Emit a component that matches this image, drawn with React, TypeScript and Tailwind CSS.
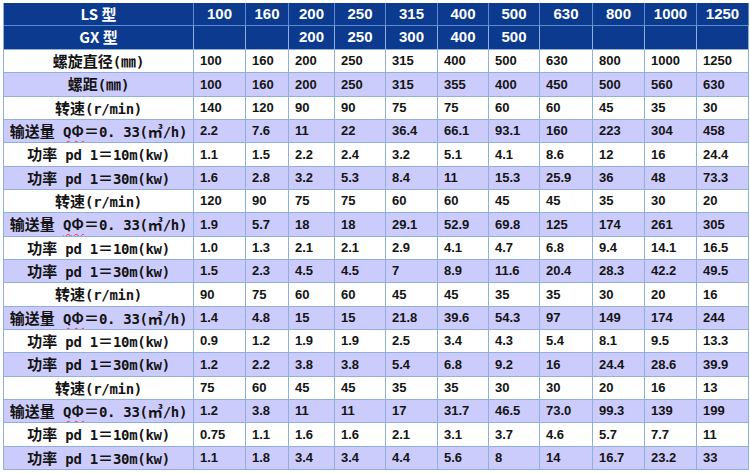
import React from "react"

const sizes = ["100", "160", "200", "250", "315", "400", "500", "630", "800", "1000", "1250"]
const gx = ["", "", "200", "250", "300", "400", "500", "", "", "", ""]

// half-width latin inside the labels is monospaced in the original sheet
function M({ children }: { children: React.ReactNode }) {
  return <span className="font-['DejaVu_Sans_Mono',monospace] text-[14px] leading-none tracking-[-0.3px]">{children}</span>
}

const speed = (
  <>
    转速<M>(r/min)</M>
  </>
)
const flow = (
  <>
    输送量<M> </M>
    <span className="underline decoration-wavy decoration-red-500 decoration-1 underline-offset-[3px]">
      <M>Q</M>Φ
    </span>
    ＝<M>0. 33(</M>㎥<M>/h)</M>
  </>
)
const p10 = (
  <>
    功率<M> pd 1</M>＝<M>10m(kw)</M>
  </>
)
const p30 = (
  <>
    功率<M> pd 1</M>＝<M>30m(kw)</M>
  </>
)

type Row = { label: React.ReactNode; values: string[] }

const rows: Row[] = [
  { label: <>螺旋直径<M>(</M>㎜<M>)</M></>, values: ["100", "160", "200", "250", "315", "400", "500", "630", "800", "1000", "1250"] },
  { label: <>螺距<M>(</M>㎜<M>)</M></>, values: ["100", "160", "200", "250", "315", "355", "400", "450", "500", "560", "630"] },
  { label: speed, values: ["140", "120", "90", "90", "75", "75", "60", "60", "45", "35", "30"] },
  { label: flow, values: ["2.2", "7.6", "11", "22", "36.4", "66.1", "93.1", "160", "223", "304", "458"] },
  { label: p10, values: ["1.1", "1.5", "2.2", "2.4", "3.2", "5.1", "4.1", "8.6", "12", "16", "24.4"] },
  { label: p30, values: ["1.6", "2.8", "3.2", "5.3", "8.4", "11", "15.3", "25.9", "36", "48", "73.3"] },
  { label: speed, values: ["120", "90", "75", "75", "60", "60", "45", "45", "35", "30", "20"] },
  { label: flow, values: ["1.9", "5.7", "18", "18", "29.1", "52.9", "69.8", "125", "174", "261", "305"] },
  { label: p10, values: ["1.0", "1.3", "2.1", "2.1", "2.9", "4.1", "4.7", "6.8", "9.4", "14.1", "16.5"] },
  { label: p30, values: ["1.5", "2.3", "4.5", "4.5", "7", "8.9", "11.6", "20.4", "28.3", "42.2", "49.5"] },
  { label: speed, values: ["90", "75", "60", "60", "45", "45", "35", "35", "30", "20", "16"] },
  { label: flow, values: ["1.4", "4.8", "15", "15", "21.8", "39.6", "54.3", "97", "149", "174", "244"] },
  { label: p10, values: ["0.9", "1.2", "1.9", "1.9", "2.5", "3.4", "4.3", "5.4", "8.1", "9.5", "13.3"] },
  { label: p30, values: ["1.2", "2.2", "3.8", "3.8", "5.4", "6.8", "9.2", "16", "24.4", "28.6", "39.9"] },
  { label: speed, values: ["75", "60", "45", "45", "35", "35", "30", "30", "20", "16", "13"] },
  { label: flow, values: ["1.2", "3.8", "11", "11", "17", "31.7", "46.5", "73.0", "99.3", "139", "199"] },
  { label: p10, values: ["0.75", "1.1", "1.6", "1.6", "2.1", "3.1", "3.7", "4.6", "5.7", "7.7", "11"] },
  { label: p30, values: ["1.1", "1.8", "3.4", "3.4", "4.4", "5.6", "8", "14", "16.7", "23.2", "33"] },
]

export default function App() {
  return (
    <div className="w-[750px] h-[474px] bg-white">
      <div className="ml-[3px] mt-[3px] w-[745px] h-[467px] grid border-l border-[#8fb0dc] grid-cols-[190px_52px_43px_46px_51px_52px_51px_51px_53px_52px_52px_52px] grid-rows-[23px_24px_repeat(18,minmax(0,1fr))]">
        {/* header: LS */}
        <div className="bg-[#0b3a8e] border-r border-b border-[#5d8bd0] flex items-center justify-center text-white font-bold text-[15px] font-['Noto_Sans_CJK_SC',sans-serif]">
          LS 型
        </div>
        {sizes.map((s, i) => (
          <div key={"ls" + i} className="bg-[#0b3a8e] border-r border-b border-[#5d8bd0] flex items-center justify-center text-white font-bold text-[15px] font-['Liberation_Sans',Arial,sans-serif]">
            {s}
          </div>
        ))}

        {/* header: GX */}
        <div className="bg-[#0b3a8e] border-r border-b border-[#8fb0dc] flex items-center justify-center text-white font-bold text-[15px] font-['Noto_Sans_CJK_SC',sans-serif]">
          GX 型
        </div>
        {gx.map((s, i) => (
          <div key={"gx" + i} className="bg-[#0b3a8e] border-r border-b border-[#8fb0dc] flex items-center justify-center text-white font-bold text-[15px] font-['Liberation_Sans',Arial,sans-serif]">
            {s}
          </div>
        ))}

        {rows.map((r, ri) => {
          const bg = ri % 2 === 0 ? "bg-white" : "bg-[#ccccfc]"
          return (
            <React.Fragment key={ri}>
              <div className={`${bg} border-r border-b border-[#8fb0dc] flex items-center justify-center overflow-hidden text-[15px] leading-[18px] font-bold text-[#141414] whitespace-pre font-['Noto_Sans_CJK_SC',sans-serif]`}>
                <span>{r.label}</span>
              </div>
              {r.values.map((v, vi) => (
                <div key={vi} className={`${bg} border-r border-b border-[#8fb0dc] flex items-center pl-[6px] text-[13px] font-bold text-[#141414] font-['Liberation_Sans',Arial,sans-serif]`}>
                  {v}
                </div>
              ))}
            </React.Fragment>
          )
        })}
      </div>
    </div>
  )
}
